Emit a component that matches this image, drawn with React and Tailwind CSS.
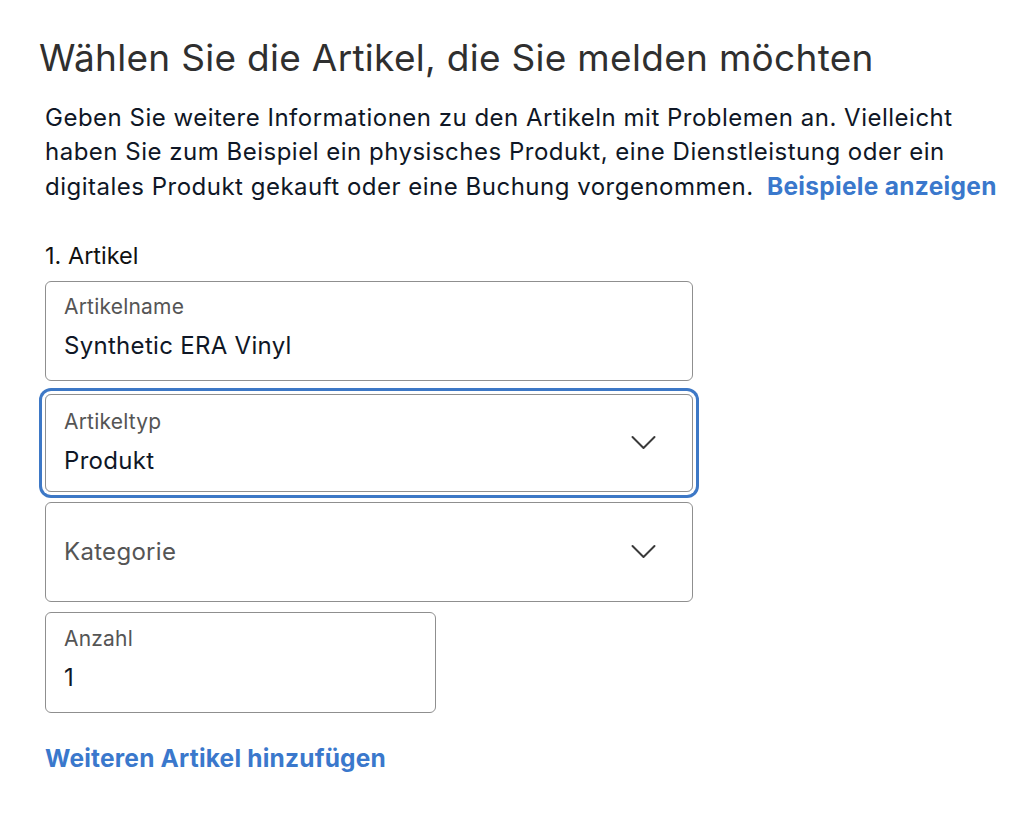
const font = { fontFamily: 'Inter, "Liberation Sans", Arial, sans-serif' };

function Chevron() {
  return (
    <svg className="absolute right-[36px] top-1/2 -translate-y-1/2" width="25" height="15" viewBox="0 0 25 15" fill="none">
      <polyline points="1.5,1.5 12.5,12.5 23.5,1.5" stroke="#3a3a3a" strokeWidth="2" strokeLinecap="round" strokeLinejoin="round" />
    </svg>
  );
}

function Field({ label, value, select, focused, width = "w-[648px]", height = "h-[100px]", extra = "" }) {
  return (
    <div className={`${width} ${extra} rounded-[6px] ${focused ? "ring-[3px] ring-[#3d78c6] ring-offset-[3px]" : ""}`}>
      <div className={`relative ${height} rounded-[6px] border border-[#8f8f8f] bg-white px-[18px] flex flex-col justify-center`}>
        {value !== undefined ? (
          <div className={focused ? "-mt-[1px]" : "-mt-[7px]"}>
            <div className="text-[21px] leading-[24px] tracking-[0.2px] text-[#555]">{label}</div>
            <div className="mt-[13px] text-[24px] leading-[28px] tracking-[0.3px] text-[#0f1726]">{value}</div>
          </div>
        ) : (
          <div className="text-[24px] leading-[28px] tracking-[0.3px] text-[#555]">{label}</div>
        )}
        {select && <Chevron />}
      </div>
    </div>
  );
}

export default function App() {
  return (
    <div className="min-h-[813px] w-[1030px] bg-white" style={font}>
      <div className="pl-[39px] pt-[35px]">
        <h1 className="text-[37px] leading-[46px] tracking-[0.3px] text-[#2f2f2f]">Wählen Sie die Artikel, die Sie melden möchten</h1>
      </div>
      <div className="pl-[45px] pr-[10px]">
        <p className="mt-[20px] text-[24px] leading-[34px] tracking-[0.5px] text-[#0f1726]">
          Geben Sie weitere Informationen zu den Artikeln mit Problemen an. Vielleicht<br />
          haben Sie zum Beispiel ein physisches Produkt, eine Dienstleistung oder ein<br />
          digitales Produkt gekauft oder eine Buchung vorgenommen.{" "}
          <span className="ml-[6px] text-[24.5px] font-bold tracking-[0.3px] text-[#3a78cc]">Beispiele anzeigen</span>
        </p>
        <div className="mt-[38px] text-[23.5px] leading-[28px] text-[#111]">1. Artikel</div>
        <div className="mt-[11px] flex flex-col gap-[10px]">
          <Field label="Artikelname" value="Synthetic ERA Vinyl" />
          <Field label="Artikeltyp" value="Produkt" select focused height="h-[98px]" extra="mt-[3px]" />
          <Field label="Kategorie" select />
          <Field label="Anzahl" value="1" width="w-[391px]" height="h-[101px]" />
        </div>
        <div className="mt-[30px] text-[24.5px] leading-[30px] font-bold tracking-[0.2px] text-[#3a78cc]">Weiteren Artikel hinzufügen</div>
      </div>
    </div>
  );
}
